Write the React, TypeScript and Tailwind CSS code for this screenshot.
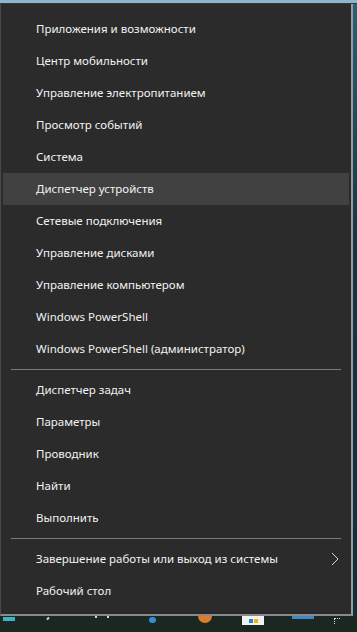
const groups: { label: string; active?: boolean; arrow?: boolean }[][] = [
  [
    { label: 'Приложения и возможности' },
    { label: 'Центр мобильности' },
    { label: 'Управление электропитанием' },
    { label: 'Просмотр событий' },
    { label: 'Система' },
    { label: 'Диспетчер устройств', active: true },
    { label: 'Сетевые подключения' },
    { label: 'Управление дисками' },
    { label: 'Управление компьютером' },
    { label: 'Windows PowerShell' },
    { label: 'Windows PowerShell (администратор)' },
  ],
  [
    { label: 'Диспетчер задач' },
    { label: 'Параметры' },
    { label: 'Проводник' },
    { label: 'Найти' },
    { label: 'Выполнить' },
  ],
  [{ label: 'Завершение работы или выход из системы', arrow: true }, { label: 'Рабочий стол' }],
]

function MenuRow({ label, active, arrow }: { label: string; active?: boolean; arrow?: boolean }) {
  return (
    <div
      className={`mx-[2px] flex h-[32px] items-center pl-[33px] pr-[10px] ${active ? 'bg-[#414141]' : ''}`}
    >
      <span className="flex-1 text-[11.5px] text-[#f2f2f2]">{label}</span>
      {arrow && (
        <svg width="8" height="14" viewBox="0 0 8 14" fill="none">
          <path d="M1 1l6 6-6 6" stroke="#d8d8d8" strokeWidth="1" />
        </svg>
      )}
    </div>
  )
}

export default function App() {
  return (
    <div
      className="flex h-[632px] w-[357px] flex-col overflow-hidden bg-[#163544]"
      style={{ fontFamily: '"Noto Sans", "Open Sans", sans-serif' }}
    >
      <div className="h-[3px] bg-[#8fb6c8]" />
      <div className="h-[1px] bg-[#2c3d45]" />
      <div className="flex flex-1">
        <div className="flex h-[612px] w-[353px] flex-col border-b-[2px] border-l border-r-[2px] border-b-[#8a8a8a] border-l-[#4a4a4a] border-r-[#9a9a9a] bg-[#2b2b2b] pb-[6px] pt-[9px]">
          {groups.map((group, gi) => (
            <div key={gi}>
              {gi > 0 && (
                <div className="flex h-[9px] items-center px-[10px]">
                  <div className="h-px flex-1 bg-[#7a7a7a]" />
                </div>
              )}
              {group.map((item) => (
                <MenuRow key={item.label} {...item} />
              ))}
            </div>
          ))}
        </div>
        <div className="flex-1 bg-[linear-gradient(180deg,#2a5f74,#123645_40%,#0f2f3c)]" />
      </div>
      <div className="flex h-[16px] items-start bg-[#1b2822]">
        <div className="ml-[3px] mt-[1px] h-[4px] w-[12px] bg-[#36b6c8]" />
        <div className="ml-[32px] mt-[1px] h-[3px] w-[2px] rotate-45 bg-[#d0d0d0]" />
        <div className="ml-[46px] h-[2px] w-[14px] border-x-[2px] border-[#d8d8d8]" />
        <div className="ml-[40px] mt-[1px] h-[6px] w-[7px] rounded-sm bg-[#2f8fd6]" />
        <div className="ml-[42px] h-[7px] w-[14px] rounded-b-full bg-[#e07b2c]" />
        <div className="ml-[30px] flex h-[9px] w-[22px] items-center justify-center gap-[1px] bg-[#f2f2f2]">
          <div className="h-[4px] w-[4px] bg-[#1f87d8]" />
          <div className="h-[4px] w-[4px] bg-[#f4b400]" />
        </div>
        <div className="ml-[28px] h-[3px] w-[22px] bg-[#3b87c8]" />
        <div className="ml-[20px] mt-[2px] h-[6px] w-[6px] border-l border-t border-dotted border-[#d8d8d8]" />
      </div>
    </div>
  )
}
